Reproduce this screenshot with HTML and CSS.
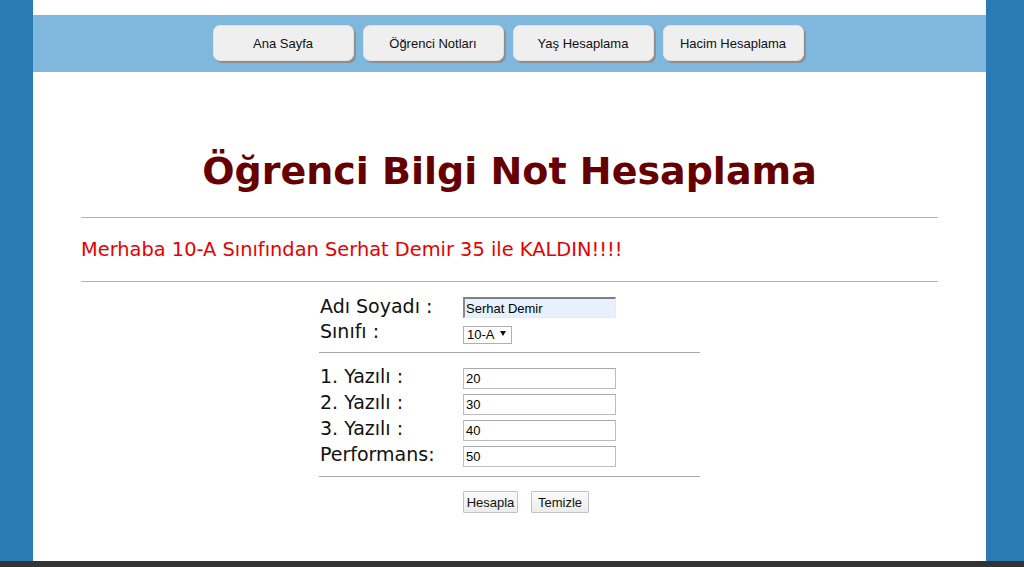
FILE: index.html
```html
<!DOCTYPE html>
<html lang="tr">
<head>
<meta charset="utf-8">
<title>Öğrenci Bilgi Not Hesaplama</title>
<link rel="stylesheet" href="styles.css">
</head>
<body>
<div class="page">
  <div class="top-strip"></div>
  <nav class="nav">
    <a class="nav-btn" href="#">Ana Sayfa</a>
    <a class="nav-btn" href="#">Öğrenci Notları</a>
    <a class="nav-btn" href="#">Yaş Hesaplama</a>
    <a class="nav-btn" href="#">Hacim Hesaplama</a>
  </nav>
  <h1 class="title">Öğrenci Bilgi Not Hesaplama</h1>
  <hr class="rule">
  <p class="result">Merhaba 10-A Sınıfından Serhat Demir 35 ile KALDIN!!!!</p>
  <hr class="rule rule-2">
  <form class="form">
    <div class="row row-a">
      <label class="lbl">Adı Soyadı :</label>
      <input class="field field-auto" type="text" value="Serhat Demir">
    </div>
    <div class="row row-a">
      <label class="lbl">Sınıfı :</label>
      <span class="select-wrap"><select class="sel"><option>10-A</option></select></span>
    </div>
    <hr class="form-rule">
    <div class="row row-b">
      <label class="lbl">1. Yazılı :</label>
      <input class="field" type="text" value="20">
    </div>
    <div class="row row-b">
      <label class="lbl">2. Yazılı :</label>
      <input class="field" type="text" value="30">
    </div>
    <div class="row row-b">
      <label class="lbl">3. Yazılı :</label>
      <input class="field" type="text" value="40">
    </div>
    <div class="row row-b">
      <label class="lbl">Performans:</label>
      <input class="field" type="text" value="50">
    </div>
    <hr class="form-rule form-rule-2">
    <div class="actions">
      <button type="button" class="btn btn-calc">Hesapla</button>
      <button type="button" class="btn btn-clear">Temizle</button>
    </div>
  </form>
</div>
<div class="footer-bar"></div>
</body>
</html>
```

FILE: styles.css
```css
html, body {
  margin: 0;
  padding: 0;
}
body {
  background: #2a7ab5;
  font-family: "DejaVu Sans", Verdana, sans-serif;
  overflow: hidden;
}
.page {
  margin-left: 33px;
  width: 953px;
  height: 561px;
  background: #ffffff;
  display: flex;
  flex-direction: column;
}
.top-strip {
  height: 15px;
}
.nav {
  height: 57px;
  box-sizing: border-box;
  padding-top: 10px;
  padding-right: 3px;
  background: #7fb7dd;
  display: flex;
  justify-content: center;
  align-items: flex-start;
  gap: 9px;
}
.nav-btn {
  width: 141px;
  height: 36px;
  box-sizing: border-box;
  background: #efefef;
  border: 1px solid #e2e2e2;
  border-radius: 7px;
  box-shadow: 2px 2px 0 #8f8f8f;
  display: flex;
  align-items: center;
  justify-content: center;
  padding-top: 1px;
  font-family: "Liberation Sans", Arial, sans-serif;
  font-size: 13px;
  color: #111;
  text-decoration: none;
}
.title {
  margin: 77px 0 0;
  text-align: center;
  font-family: "DejaVu Sans", Verdana, sans-serif;
  font-weight: bold;
  font-size: 38px;
  line-height: 44px;
  color: #660000;
}
.rule {
  margin: 24px 48px 0;
  border: 0;
  border-top: 1px solid #b4b4b4;
  height: 0;
}
.result {
  margin: 21px 0 0 48px;
  font-size: 19.4px;
  line-height: 21px;
  color: #e60000;
}
.rule-2 {
  margin-top: 21px;
}
.form {
  width: 381px;
  margin: 13px auto 0;
  display: flex;
  flex-direction: column;
}
.row {
  display: grid;
  grid-template-columns: 144px 1fr;
  align-items: center;
}
.row-a {
  height: 25px;
}
.row-b {
  height: 26px;
}
.lbl {
  padding-left: 1px;
  font-size: 19px;
  line-height: 22px;
  color: #111;
  position: relative;
  top: -2px;
}
.field {
  width: 153px;
  height: 21px;
  box-sizing: border-box;
  margin: 0;
  padding: 0 2px;
  border: 1px solid #bcbcbc;
  border-top-color: #a9a9a9;
  background: #fff;
  font-family: "Liberation Sans", Arial, sans-serif;
  font-size: 13px;
  color: #000;
  outline: none;
}
.field-auto {
  background: #e8f0fe;
  border-top: 2px solid #808080;
  border-left: 2px solid #8a8a8a;
  border-right: 1px solid #e4ebf7;
  border-bottom: 1px solid #e4ebf7;
  padding-left: 1px;
}
.select-wrap {
  position: relative;
  display: inline-block;
  width: 49px;
  height: 18px;
  justify-self: start;
}
.sel {
  appearance: none;
  -webkit-appearance: none;
  width: 49px;
  height: 18px;
  box-sizing: border-box;
  margin: 0;
  padding: 0 0 0 3px;
  border: 1px solid #b0b0b0;
  background: #fff;
  font-family: "Liberation Sans", Arial, sans-serif;
  font-size: 13px;
  line-height: 16px;
  color: #000;
  border-radius: 0;
}
.select-wrap::after {
  content: "";
  position: absolute;
  right: 6px;
  top: 7px;
  width: 0;
  height: 0;
  border-left: 3px solid transparent;
  border-right: 3px solid transparent;
  border-top: 5px solid #111;
  pointer-events: none;
}
.form-rule {
  margin: 7px 0 12px;
  border: 0;
  border-top: 1px solid #a8a8a8;
  height: 0;
}
.form-rule-2 {
  margin: 7px 0 14px;
}
.actions {
  display: flex;
  gap: 13px;
  padding-left: 144px;
}
.btn {
  height: 22px;
  box-sizing: border-box;
  margin: 0;
  padding: 0;
  border: 1px solid #c2c2c2;
  background: linear-gradient(#fafafa, #ececec);
  font-family: "Liberation Sans", Arial, sans-serif;
  font-size: 13px;
  color: #111;
  border-radius: 1px;
  text-align: center;
}
.btn-calc {
  width: 55px;
}
.btn-clear {
  width: 58px;
}
.footer-bar {
  height: 6px;
  background: #333333;
}
```
